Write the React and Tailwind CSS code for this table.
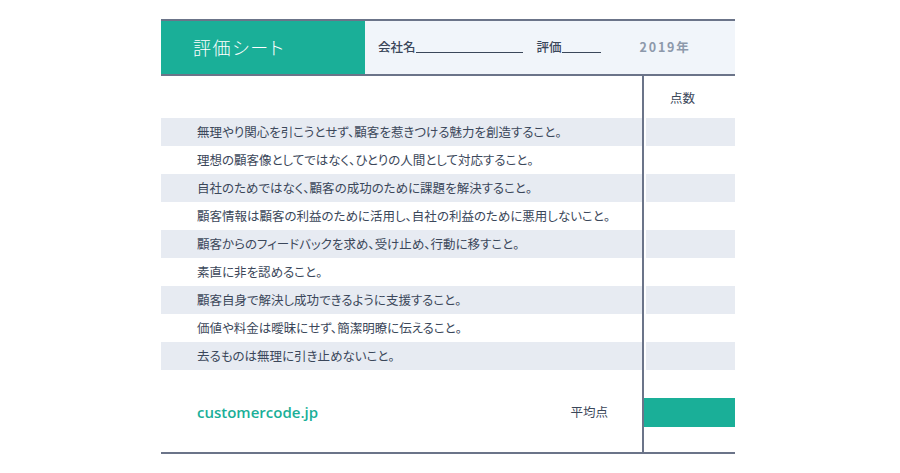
import React from "react";

const rows = [
  "無理やり関心を引こうとせず、顧客を惹きつける魅力を創造すること。",
  "理想の顧客像としてではなく、ひとりの人間として対応すること。",
  "自社のためではなく、顧客の成功のために課題を解決すること。",
  "顧客情報は顧客の利益のために活用し、自社の利益のために悪用しないこと。",
  "顧客からのフィードバックを求め、受け止め、行動に移すこと。",
  "素直に非を認めること。",
  "顧客自身で解決し成功できるように支援すること。",
  "価値や料金は曖昧にせず、簡潔明瞭に伝えること。",
  "去るものは無理に引き止めないこと。",
];

const jp = "font-['Noto_Sans_CJK_JP','Noto_Sans',sans-serif] [font-feature-settings:'palt']";

export default function App() {
  return (
    <div className={`w-[900px] h-[473px] bg-white pt-[19px] pl-[161px] ${jp}`}>
      <div className="w-[574px] border-t-2 border-b-2 border-[#6b7489]">
        {/* header */}
        <div className="flex h-[55px] border-b-2 border-[#6b7489]">
          <div className="w-[204px] bg-[#1aaf98] flex items-center pl-[32px] text-white text-[18px] font-light tracking-[1.6px]">
            評価シート
          </div>
          <div className="flex-1 bg-[#f1f5fa] flex items-center pl-[13px] text-[12.5px] text-[#3b475a] font-medium">
            <span>会社名</span>
            <span className="inline-block w-[107px] border-b border-[#3b475a] mt-[10px]" />
            <span className="ml-[14px]">評価</span>
            <span className="inline-block w-[39px] border-b border-[#3b475a] mt-[10px]" />
            <span className="ml-[39px] text-[#8d99ab] font-bold tracking-[1.8px]">2019年</span>
          </div>
        </div>
        {/* body */}
        <div className="flex">
          <div className="w-[483px] border-r-2 border-[#6b7489]">
            <div className="h-[42px]" />
            {rows.map((t, i) => (
              <div
                key={i}
                className={`h-[28px] flex items-center pl-[36px] text-[12.5px] text-[#3b475a] ${i % 2 === 0 ? "bg-[#e7ebf2]" : "bg-white"}`}
              >
                {t}
              </div>
            ))}
            <div className="h-[82px] flex items-center justify-between pl-[36px] pr-[34px]">
              <span className="font-['Open_Sans',sans-serif] font-semibold text-[15px] text-[#1aaf98] mt-[2px]">customercode.jp</span>
              <span className="text-[12.5px] text-[#3b475a] mt-[2px]">平均点</span>
            </div>
          </div>
          <div className="flex-1">
            <div className="h-[42px] flex items-center pl-[26px] text-[12.5px] text-[#3b475a] pt-[3px]">点数</div>
            {rows.map((t, i) => (
              <div key={i} className={`h-[28px] ml-[2px] ${i % 2 === 0 ? "bg-[#e7ebf2]" : "bg-white"}`} />
            ))}
            <div className="h-[82px] flex flex-col">
              <div className="h-[28px]" />
              <div className="h-[29px] bg-[#1aaf98]" />
            </div>
          </div>
        </div>
      </div>
    </div>
  );
}
